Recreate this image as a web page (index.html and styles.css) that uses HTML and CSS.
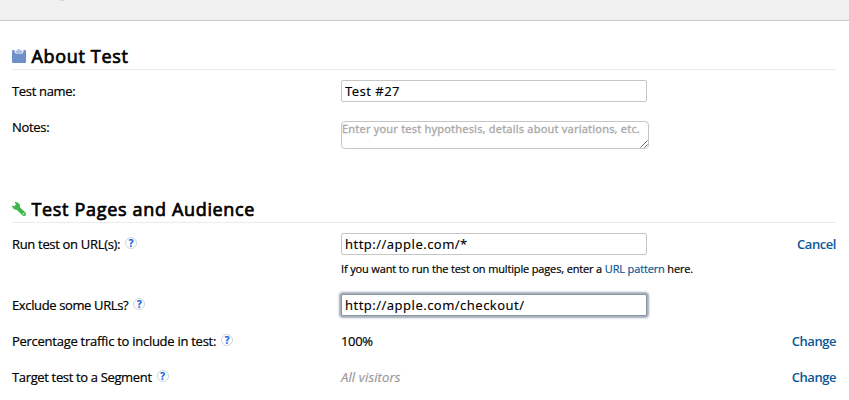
FILE: index.html
```html
<!DOCTYPE html>
<html lang="en">
<head>
<meta charset="utf-8">
<title>Test settings</title>
<link rel="stylesheet" href="styles.css">
</head>
<body>
<header class="topbar"><span class="topbar-mark"></span></header>
<main>
  <section class="about">
    <h2><svg class="icon" viewBox="0 0 14 14"><path fill="#6e8fc9" d="M1 1h1.500q0 3.500 1.500 3.500h6q1.500 0 1.500-3.500H13q1 0 1 1v11q0 1-1 1H1q-1 0-1-1V2q0-1 1-1z"/><path fill="#a9bde2" d="M3.500 1.500h1.700q.5-1.500 1.800-1.500t1.800 1.500h1.700v1.700q0 .8-1 .8h-5q-1 0-1-.8z"/></svg><span>About Test</span></h2>
    <div class="row">
      <label class="label" for="name">Test name:</label>
      <input id="name" class="field" type="text" value="Test #27">
    </div>
    <div class="row">
      <label class="label" for="notes">Notes:</label>
      <div class="notes-wrap">
        <textarea id="notes" class="notes" placeholder="Enter your test hypothesis, details about variations, etc."></textarea>
        <svg class="grip" viewBox="0 0 8 8"><path d="M.5 7.500l7-7M4.500 7.500l3-3" stroke="#555" stroke-width=".9" fill="none"/></svg>
      </div>
    </div>
  </section>
  <section class="audience">
    <h2><svg class="icon" viewBox="0 0 14 14"><path d="M4.500 4.700L12 12" stroke="#3fb54b" stroke-width="4" stroke-linecap="round"/><path fill="#3fb54b" d="M2.500 0Q6-.3 7.500 2.200 8.700 5 7 6.700 5.500 8 3 7.500.3 6.700 0 3.200L2.300 4.600 4.200 2.800z"/><circle cx="11.700" cy="11.700" r=".8" fill="#fff"/></svg><span>Test Pages and Audience</span></h2>
    <div class="row row-url">
      <div class="label"><span>Run test on URL(s):</span><span class="help">?</span></div>
      <div class="value">
        <input class="field" type="text" value="http://apple.com/*">
        <p class="hint">If you want to run the test on multiple pages, enter a <a href="#">URL pattern</a> here.</p>
      </div>
      <a class="action" href="#">Cancel</a>
    </div>
    <div class="row">
      <div class="label"><span class="exclude">Exclude some URLs?</span><span class="help">?</span></div>
      <input class="field active" type="text" value="http://apple.com/checkout/">
    </div>
    <div class="row">
      <div class="label"><span class="traffic">Percentage traffic to include in test:</span><span class="help">?</span></div>
      <span class="text">100%</span>
      <a class="action" href="#">Change</a>
    </div>
    <div class="row">
      <div class="label"><span class="segment">Target test to a Segment</span><span class="help">?</span></div>
      <em class="text">All visitors</em>
      <a class="action" href="#">Change</a>
    </div>
  </section>
</main>
</body>
</html>
```
FILE: styles.css
```css
* { box-sizing: border-box; }
body {
  margin: 0;
  height: 400px;
  overflow: hidden;
  background: #fff;
  color: #000;
  font: 13px/22px "Open Sans", sans-serif;
  letter-spacing: -0.32px;
  -webkit-text-stroke: 0.2px;
}
a { color: #0a5896; text-decoration: none; }
.topbar { height: 21px; background: #f0f0f0; border-bottom: 1px solid #c8c8c8; }
.topbar-mark { display: block; width: 4px; height: 1px; margin-left: 60px; background: #d9d9d9; }
main { padding-left: 12px; }
section { padding-top: 22px; }
.about { height: 153px; }
h2 {
  display: flex;
  align-items: center;
  gap: 6px;
  height: 27px;
  width: 837px;
  margin: 0 0 10px;
  border-bottom: 1px solid #ebebeb;
  font-size: 18px;
  line-height: 26px;
  font-weight: 400;
  letter-spacing: 0.67px;
  white-space: nowrap;
  -webkit-text-stroke: 0.7px;
}
h2 span { margin-left: -0.5px; }
.icon { width: 14px; height: 14px; flex: none; }
.row { display: flex; align-items: flex-start; width: 824px; height: 36px; }
h2 { width: 824px; }
.row-url { height: 61px; }
.label { display: flex; width: 329px; flex: none; white-space: nowrap; }
.exclude { letter-spacing: -0.37px; }
.segment { letter-spacing: -0.35px; }
.traffic { letter-spacing: -0.27px; }
.help {
  width: 12px;
  height: 12px;
  margin: 4px 0 0 5px;
  border: 1px solid #cfd6df;
  border-radius: 50%;
  color: #1666dc;
  font: bold 10px/10px "Open Sans", sans-serif;
  letter-spacing: 0;
  text-align: center;
}
.field {
  display: block;
  width: 306px;
  height: 22px;
  margin: 0;
  padding: 0 3px;
  border: 1px solid #c6c6c6;
  border-radius: 2px;
  outline: 0;
  background: #fff;
  color: #000;
  font: 13px/20px "Noto Sans", sans-serif;
  letter-spacing: 0.47px;
  -webkit-text-stroke: 0.1px;
}
.active { border-color: #8b96a5; box-shadow: 0 0 2px 2px #a2acb8; }
.notes-wrap { position: relative; margin-top: 5px; }
.notes {
  display: block;
  width: 308px;
  height: 28px;
  padding: 0;
  border: 1px solid #c6c6c6;
  border-radius: 4px;
  outline: 0;
  resize: none;
  overflow: hidden;
  font: 11px/14px "Noto Sans", sans-serif;
  letter-spacing: 0.2px;
  -webkit-text-stroke: 0.3px;
}
.notes::placeholder { color: #a9a9a9; opacity: 1; }
.grip { position: absolute; right: 1px; bottom: 1px; width: 8px; height: 8px; }
.hint { margin: 4px 0 0; font-size: 11px; line-height: 20px; letter-spacing: -0.15px; white-space: nowrap; }
.action { margin-left: auto; font-weight: 600; letter-spacing: -0.45px; -webkit-text-stroke: 0; }
em { color: #999; letter-spacing: 0.15px; }
```
